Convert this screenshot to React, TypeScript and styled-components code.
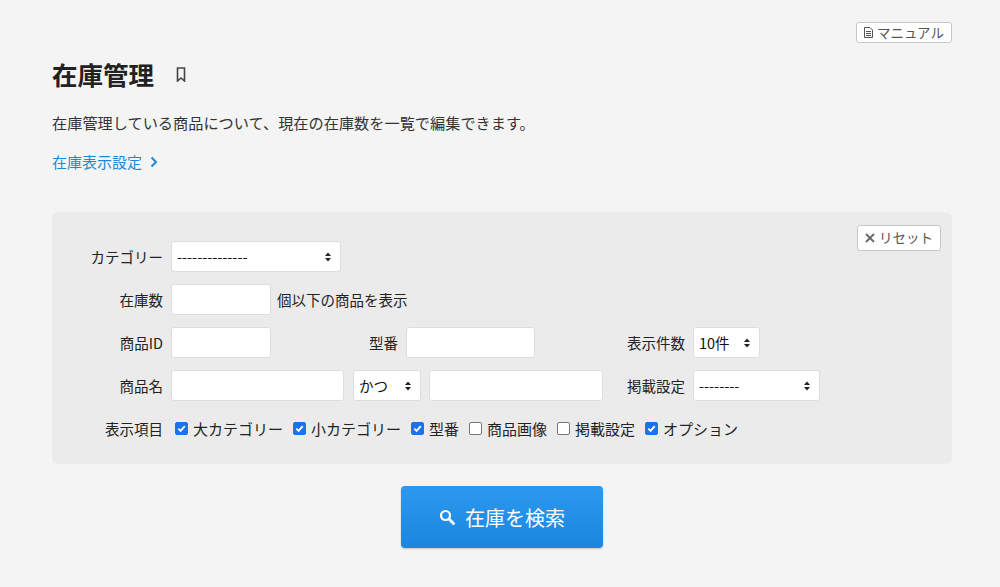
import React from "react";
import styled, { createGlobalStyle } from "styled-components";

const Global = createGlobalStyle`
  html, body { margin: 0; padding: 0; background: #f4f4f4; }
  body {
    font-family: "Noto Sans CJK JP", "Noto Sans", sans-serif;
    color: #222;
    font-size: 14px;
  }
  * { box-sizing: border-box; }
`;

const Page = styled.div`
  width: 1000px;
  height: 587px;
  padding: 22px 48px 0 52px;
  background: #f4f4f4;
`;

const TopBar = styled.div`
  display: flex;
  justify-content: flex-end;
`;

const SmallButton = styled.button<{ $h?: number }>`
  display: inline-flex;
  align-items: center;
  gap: 4px;
  height: ${(p) => p.$h || 21}px;
  padding: 0 7px;
  background: #fff;
  border: 1px solid #c8c8c8;
  border-radius: 3px;
  font-family: inherit;
  font-size: 13.5px;
  line-height: 1;
  color: #555;
`;

const TitleRow = styled.div`
  display: flex;
  align-items: center;
  gap: 22px;
  margin-top: 14px;
  height: 34px;
`;

const Title = styled.h1`
  margin: 0;
  font-size: 25.5px;
  font-weight: 700;
  color: #222;
  line-height: 34px;
`;

const Desc = styled.p`
  margin: 21px 0 0;
  font-size: 15.2px;
  line-height: 20px;
  color: #333;
`;

const Link = styled.a`
  display: inline-flex;
  align-items: center;
  gap: 8px;
  margin-top: 20px;
  font-size: 15px;
  line-height: 20px;
  color: #1b8ad6;
  text-decoration: none;
`;

const Panel = styled.div`
  margin-top: 40px;
  background: #ebebeb;
  border-radius: 6px;
  padding: 13px 11px 24px 0;
  height: 252px;
`;

const PanelTop = styled.div`
  display: flex;
  justify-content: flex-end;
  height: 16px;
`;

const Row = styled.div`
  display: flex;
  align-items: center;
  height: 31px;
  margin-bottom: 12px;
`;

const Label = styled.label<{ $w: number }>`
  width: ${(p) => p.$w}px;
  text-align: right;
  padding-right: 8px;
  font-size: 14.5px;
  color: #222;
  white-space: nowrap;
`;

const Input = styled.input<{ $w: number }>`
  width: ${(p) => p.$w}px;
  height: 31px;
  border: 1px solid #ddd;
  border-radius: 3px;
  background: #fff;
`;

const SelectBox = styled.div<{ $w: number; $mr?: number }>`
  width: ${(p) => p.$w}px;
  height: 31px;
  margin-right: ${(p) => p.$mr || 0}px;
  display: flex;
  align-items: center;
  justify-content: space-between;
  padding: 0 8px 0 5px;
  background: #fff;
  border: 1px solid #ddd;
  border-radius: 3px;
  font-size: 14.5px;
  color: #111;
`;

const Spacer = styled.span<{ $w: number }>`
  width: ${(p) => p.$w}px;
`;

const Note = styled.span`
  margin-left: 6px;
  font-size: 14.5px;
`;

const Checks = styled.div`
  display: flex;
  align-items: center;
  gap: 10px;
  padding-left: 4px;
`;

const Check = styled.span`
  display: inline-flex;
  align-items: center;
  gap: 5px;
  font-size: 15px;
`;

const Box = styled.span<{ $on: boolean }>`
  width: 13px;
  height: 13px;
  border-radius: 2px;
  display: inline-flex;
  align-items: center;
  justify-content: center;
  background: ${(p) => (p.$on ? "#1a73e8" : "#fff")};
  border: 1px solid ${(p) => (p.$on ? "#1a73e8" : "#777")};
`;

const Center = styled.div`
  display: flex;
  justify-content: center;
  margin-top: 22px;
`;

const SearchButton = styled.button`
  width: 202px;
  height: 62px;
  border: none;
  border-radius: 4px;
  background: linear-gradient(#2c98ee, #1b86df);
  color: #fff;
  font-family: inherit;
  font-size: 20px;
  display: inline-flex;
  align-items: center;
  justify-content: center;
  gap: 10px;
  box-shadow: 0 1px 2px rgba(0, 0, 0, 0.2);
`;

const Arrows = () => (
  <svg width="8" height="12" viewBox="0 0 8 12">
    <path d="M1 5 L4 1.5 L7 5Z M1 7 L4 10.5 L7 7Z" fill="#222" />
  </svg>
);

const Select = ({ w, text, mr }: { w: number; text: string; mr?: number }) => (
  <SelectBox $w={w} $mr={mr}>
    <span>{text}</span>
    <Arrows />
  </SelectBox>
);

const CheckItem = ({ on, text }: { on: boolean; text: string }) => (
  <Check>
    <Box $on={on}>
      {on && (
        <svg width="9" height="9" viewBox="0 0 10 10">
          <path d="M1.5 5.2 L4 7.6 L8.6 2.4" stroke="#fff" strokeWidth="2" fill="none" />
        </svg>
      )}
    </Box>
    {text}
  </Check>
);

export default function App() {
  return (
    <Page>
      <Global />
      <TopBar>
        <SmallButton>
          <svg width="9" height="11" viewBox="0 0 9 11">
            <path d="M0.5 0.5h5.5l2.5 2.5v7.5h-8z" fill="none" stroke="#555" />
            <path d="M2 4.5h5M2 6.5h5M2 8.5h5" stroke="#555" />
          </svg>
          マニュアル
        </SmallButton>
      </TopBar>
      <TitleRow>
        <Title>在庫管理</Title>
        <svg width="10" height="15" viewBox="0 0 10 15">
          <path d="M1.5 1h7v13l-3.5-3-3.5 3z" fill="none" stroke="#444" strokeWidth="1.6" />
        </svg>
      </TitleRow>
      <Desc>在庫管理している商品について、現在の在庫数を一覧で編集できます。</Desc>
      <Link href="#">
        在庫表示設定
        <svg width="8" height="12" viewBox="0 0 8 12">
          <path d="M1.5 1.5 L6 6 L1.5 10.5" stroke="#1b8ad6" strokeWidth="2" fill="none" />
        </svg>
      </Link>
      <Panel>
        <PanelTop>
          <SmallButton $h={26}>
            <svg width="10" height="10" viewBox="0 0 10 10">
              <path d="M1 1L9 9M9 1L1 9" stroke="#666" strokeWidth="1.8" />
            </svg>
            リセット
          </SmallButton>
        </PanelTop>
        <Row>
          <Label $w={119}>カテゴリー</Label>
          <Select w={170} text="--------------" />
        </Row>
        <Row>
          <Label $w={119}>在庫数</Label>
          <Input $w={100} />
          <Note>個以下の商品を表示</Note>
        </Row>
        <Row>
          <Label $w={119}>商品ID</Label>
          <Input $w={100} />
          <Label $w={135}>型番</Label>
          <Input $w={129} />
          <Label $w={158}>表示件数</Label>
          <Select w={67} text="10件" />
        </Row>
        <Row>
          <Label $w={119}>商品名</Label>
          <Input $w={173} />
          <Spacer $w={9} />
          <Select w={68} text="かつ" mr={8} />
          <Input $w={174} />
          <Label $w={90}>掲載設定</Label>
          <Select w={127} text="--------" />
        </Row>
        <Row>
          <Label $w={119}>表示項目</Label>
          <Checks>
            <CheckItem on text="大カテゴリー" />
            <CheckItem on text="小カテゴリー" />
            <CheckItem on text="型番" />
            <CheckItem on={false} text="商品画像" />
            <CheckItem on={false} text="掲載設定" />
            <CheckItem on text="オプション" />
          </Checks>
        </Row>
      </Panel>
      <Center>
        <SearchButton>
          <svg width="16" height="16" viewBox="0 0 16 16">
            <circle cx="6.5" cy="6.5" r="4.5" stroke="#fff" strokeWidth="2.2" fill="none" />
            <path d="M10 10 L14.5 14.5" stroke="#fff" strokeWidth="2.8" strokeLinecap="round" />
          </svg>
          在庫を検索
        </SearchButton>
      </Center>
    </Page>
  );
}
